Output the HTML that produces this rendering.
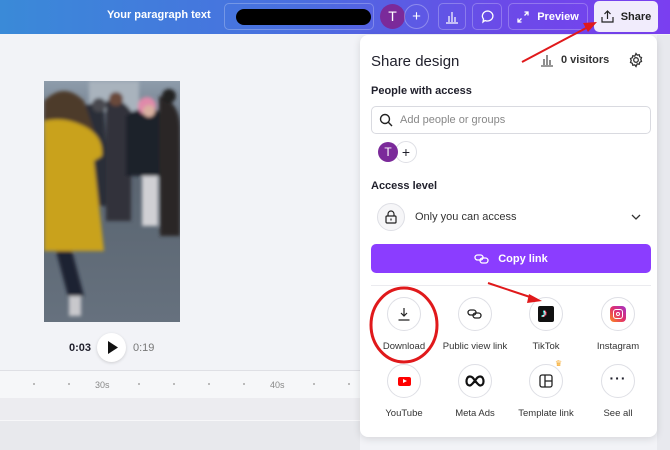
<!DOCTYPE html>
<html><head><meta charset="utf-8"><style>
*{box-sizing:border-box;margin:0;padding:0}
body{width:670px;height:450px;overflow:hidden;position:relative;background:#f2f3f7;font-family:"Liberation Sans",sans-serif;color:#1f1f2b}
.hdr{position:absolute;left:0;top:0;width:670px;height:34px;background:linear-gradient(90deg,#3a8ad8 0%,#4a6ee0 45%,#6b4ae8 75%,#7a3ff0 100%)}
.abs{position:absolute}
.hb{position:absolute;top:3px;height:27px;border:1px solid rgba(255,255,255,.25);border-radius:5px;color:#fff;font-weight:bold;font-size:11px;display:flex;align-items:center;justify-content:center}
.panel{position:absolute;left:360px;top:35px;width:297px;height:402px;background:#fff;border-radius:8px;box-shadow:0 2px 8px rgba(0,0,0,.12)}
.ic{position:absolute;width:34px;height:34px;border-radius:50%;border:1px solid #dedfe5;background:#fff;display:flex;align-items:center;justify-content:center}
.lb{position:absolute;font-size:9.5px;color:#333;width:90px;text-align:center}
.b{font-weight:bold}
.dot{position:absolute;top:383px;width:1.5px;height:1.5px;background:#bbb}
</style></head><body>
<div class="hdr">
 <div class="abs" style="left:107px;top:9px;color:#fff;font-size:11px;font-weight:bold">Your paragraph text</div>
 <div class="hb" style="left:224px;width:150px"></div>
 <div class="abs" style="left:236px;top:9px;width:135px;height:16px;background:#000;border-radius:8px"></div>
 <div class="abs" style="left:380px;top:4px;width:25px;height:25px;border-radius:50%;background:#7b2a9a;color:#fff;font-size:14px;text-align:center;line-height:25px">T</div>
 <div class="abs" style="left:404px;top:4px;width:25px;height:25px;border-radius:50%;border:1px solid rgba(255,255,255,.3);color:#fff;font-size:15px;text-align:center;line-height:23px">+</div>
 <div class="hb" style="left:438px;width:28px"><svg width="14" height="14" viewBox="0 0 14 14" fill="none" stroke="#fff" stroke-width="1.2"><path d="M1 13h12M4 12V6M7 12V2M10 12V7"/></svg></div>
 <div class="hb" style="left:472px;width:30px"><svg width="15" height="15" viewBox="0 0 15 15" fill="none" stroke="#fff" stroke-width="1.3"><path d="M7.5 2a5.5 5 0 1 1-2.5 9.5L3 13l.5-3A5.5 5 0 0 1 7.5 2z"/></svg></div>
 <div class="hb" style="left:508px;width:80px"><svg width="12" height="12" viewBox="0 0 12 12" fill="none" stroke="#fff" stroke-width="1.3" style="margin-right:8px"><path d="M1 11l3.5-3.5M1 7.5V11h3.5M11 1L7.5 4.5M7.5 1H11v3.5"/></svg>Preview</div>
 <div class="abs" style="left:594px;top:1px;width:64px;height:31px;background:#f1ecfc;border-radius:5px;font-size:11px;font-weight:bold;display:flex;align-items:center;justify-content:center;color:#222"><svg width="13" height="13" viewBox="0 0 13 13" fill="none" stroke="#222" stroke-width="1.2" style="margin-right:7px"><path d="M6.5 9V1M3.5 4l3-3 3 3M1 7v5h11V7"/></svg>Share</div>
</div>
<div class="abs" style="left:657px;top:35px;width:13px;height:415px;background:#e8e9ee"></div>
<!-- photo -->
<svg class="abs" style="left:44px;top:81px" width="136" height="241" viewBox="0 0 136 241">
<defs><linearGradient id="g" x1="0" y1="0" x2="0" y2="1"><stop offset="0" stop-color="#8e9cab"/><stop offset=".3" stop-color="#5a6470"/><stop offset=".55" stop-color="#5d6874"/><stop offset="1" stop-color="#66717e"/></linearGradient>
<filter id="bl"><feGaussianBlur stdDeviation="1.8"/></filter></defs>
<rect width="136" height="241" fill="url(#g)"/>
<g filter="url(#bl)">
<rect x="45" y="0" width="50" height="30" fill="#a9b3bd"/>
<path d="M40 25 q10-5 20 0 l5 100 h-20z" fill="#2a2e38"/>
<path d="M62 20 q15 -5 25 10 l0 110 h-25z" fill="#30323a"/>
<circle cx="72" cy="18" r="7" fill="#6a4a3a"/>
<circle cx="55" cy="24" r="7" fill="#4a4a50"/>
<path d="M82 35 q20-15 40 0 v60 h-40z" fill="#1f232c"/>
<circle cx="103" cy="25" r="9" fill="#e08aaa"/>
<circle cx="105" cy="30" r="6" fill="#d9b0a0"/>
<rect x="98" y="95" width="16" height="50" fill="#d0d0d4"/>
<path d="M115 15 q20 5 21 30 v110 h-20z" fill="#2a2628"/>
<circle cx="125" cy="15" r="7" fill="#222"/>
<path d="M0 20 q20-20 40 0 l10 30 h-50z" fill="#4e3a2c"/>
<path d="M0 40 q20-5 40 5 q20 10 18 30 l-8 5 l10 90 h-60z" fill="#c9a21e"/>
<path d="M12 170 h16 l12 45 h-16z" fill="#1d2230"/>
<rect x="25" y="215" width="12" height="20" fill="#c8c8cc"/>
</g>
</svg>
<div class="abs" style="left:69px;top:342px;font-size:11px;font-weight:bold">0:03</div>
<div class="abs" style="left:97px;top:333px;width:29px;height:29px;border-radius:50%;background:#fff;box-shadow:0 1px 3px rgba(0,0,0,.15)"><svg width="29" height="29"><path d="M11 8l10 6.5-10 6.5z" fill="#111"/></svg></div>
<div class="abs" style="left:133px;top:342px;font-size:11px;color:#777">0:19</div>
<div class="abs" style="left:0;top:370px;width:360px;height:1px;background:#dfe0e5"></div>
<div class="abs" style="left:0;top:371px;width:360px;height:27px;background:#f6f7f9"></div>
<div class="dot" style="left:33px"></div><div class="dot" style="left:68px"></div><div class="dot" style="left:138px"></div><div class="dot" style="left:173px"></div><div class="dot" style="left:208px"></div><div class="dot" style="left:243px"></div><div class="dot" style="left:313px"></div><div class="dot" style="left:348px"></div>
<div class="abs" style="left:95px;top:380px;font-size:9px;color:#888">30s</div>
<div class="abs" style="left:270px;top:380px;font-size:9px;color:#888">40s</div>
<div class="abs" style="left:0;top:398px;width:360px;height:22px;background:#ececf0"></div>
<div class="abs" style="left:0;top:420px;width:360px;height:1px;background:#f7f7f9"></div>
<div class="abs" style="left:0;top:421px;width:360px;height:29px;background:#e8e9ed"></div>
<!-- panel -->
<div class="panel">
 <div class="abs" style="left:11px;top:18px;font-size:15px">Share design</div>
 <svg class="abs" style="left:180px;top:19px" width="14" height="13" viewBox="0 0 14 13" fill="none" stroke="#333" stroke-width="1.1"><path d="M1 12h12M4 11V5M7 11V1M10 11V6"/></svg>
 <div class="abs" style="left:201px;top:19px;font-size:11px;font-weight:bold;color:#333">0 visitors</div>
 <svg class="abs" style="left:268px;top:17px" width="16" height="16" viewBox="0 0 16 16" fill="none" stroke="#333" stroke-width="1.3"><circle cx="8" cy="8" r="2.3"/><path d="M8 1.5l1.2 1.6 2-.4.5 2 1.8.9-.7 1.9.7 1.9-1.8.9-.5 2-2-.4L8 14.5l-1.2-1.6-2 .4-.5-2-1.8-.9.7-1.9-.7-1.9 1.8-.9.5-2 2 .4z"/></svg>
 <div class="abs b" style="left:11px;top:50px;font-size:11px">People with access</div>
 <div class="abs" style="left:11px;top:71px;width:280px;height:28px;border:1px solid #d9dae0;border-radius:5px"></div>
 <svg class="abs" style="left:19px;top:78px" width="14" height="14" viewBox="0 0 14 14" fill="none" stroke="#222" stroke-width="1.4"><circle cx="6" cy="6" r="4.5"/><path d="M9.3 9.3L13 13"/></svg>
 <div class="abs" style="left:40px;top:79px;font-size:11px;color:#888">Add people or groups</div>
 <div class="abs" style="left:35px;top:106px;width:22px;height:22px;border-radius:50%;border:1px solid #dedfe5;background:#fff;text-align:center;line-height:20px;font-size:14px">+</div>
 <div class="abs" style="left:18px;top:107px;width:20px;height:20px;border-radius:50%;background:#7b2a9a;color:#fff;text-align:center;line-height:20px;font-size:12px">T</div>
 <div class="abs b" style="left:11px;top:145px;font-size:11px">Access level</div>
 <div class="abs" style="left:17px;top:168px;width:28px;height:28px;border-radius:50%;border:1px solid #dedfe5;background:#f6f6f8"></div>
 <svg class="abs" style="left:25px;top:175px" width="12" height="14" viewBox="0 0 12 14" fill="none" stroke="#222" stroke-width="1.2"><rect x="1" y="6" width="10" height="7" rx="1"/><path d="M3 6V4a3 3 0 0 1 6 0v2M6 8.5v2"/></svg>
 <div class="abs" style="left:55px;top:176px;font-size:11px;color:#333">Only you can access</div>
 <svg class="abs" style="left:271px;top:178px" width="10" height="8" viewBox="0 0 10 8" fill="none" stroke="#333" stroke-width="1.3"><path d="M1 2l4 4 4-4"/></svg>
 <div class="abs" style="left:11px;top:209px;width:280px;height:29px;background:#8b3dff;border-radius:5px;color:#fff;font-size:11px;font-weight:bold;display:flex;align-items:center;justify-content:center"><svg width="16" height="12" viewBox="0 0 16 12" fill="none" stroke="#fff" stroke-width="1.3" style="margin-right:8px"><rect x="1" y="2" width="8" height="5" rx="2.5"/><rect x="6" y="5" width="8" height="5" rx="2.5"/></svg>Copy link</div>
 <div class="abs" style="left:11px;top:250px;width:280px;height:1px;background:#ebebef"></div>
 <div class="ic" style="left:27px;top:262px"><svg width="14" height="14" viewBox="0 0 14 14" fill="none" stroke="#222" stroke-width="1.2"><path d="M7 1v8M4 6l3 3 3-3M1.5 13h11"/></svg></div>
 <div class="lb" style="left:-1px;top:306px">Download</div>
 <div class="ic" style="left:98px;top:262px"><svg width="16" height="12" viewBox="0 0 16 12" fill="none" stroke="#222" stroke-width="1.3"><rect x="1" y="2" width="8" height="5" rx="2.5"/><rect x="6" y="5" width="8" height="5" rx="2.5"/></svg></div>
 <div class="lb" style="left:70px;top:306px">Public view link</div>
 <div class="ic" style="left:169px;top:262px"><div style="width:16px;height:16px;background:#111;border-radius:2px;position:relative"><span style="position:absolute;left:3px;top:0;color:#fff;font-size:12px;font-weight:bold;text-shadow:-1px 0 #25f4ee,1px 0 #fe2c55">♪</span></div></div>
 <div class="lb" style="left:141px;top:306px">TikTok</div>
 <div class="ic" style="left:241px;top:262px"><div style="width:16px;height:16px;border-radius:4px;background:linear-gradient(45deg,#fd8a1f,#e1306c 50%,#a233c9);display:flex;align-items:center;justify-content:center"><div style="width:10px;height:10px;border:1.3px solid #fff;border-radius:3px;display:flex;align-items:center;justify-content:center"><div style="width:4px;height:4px;border:1.2px solid #fff;border-radius:50%"></div></div></div></div>
 <div class="lb" style="left:213px;top:306px">Instagram</div>
 <div class="ic" style="left:27px;top:329px"><div style="width:13px;height:9px;background:#f00;border-radius:2px;position:relative"><div style="position:absolute;left:5px;top:2px;border-left:4px solid #fff;border-top:2.5px solid transparent;border-bottom:2.5px solid transparent"></div></div></div>
 <div class="lb" style="left:-1px;top:373px">YouTube</div>
 <div class="ic" style="left:98px;top:329px"><svg width="20" height="12" viewBox="0 0 20 12" fill="none" stroke="#111" stroke-width="2.2"><path d="M10 6C8 2 6.5 1.5 5 1.5 2.5 1.5 1.5 4 1.5 6.5S3 10.5 4.5 10.5C7 10.5 9 6 10 6s3 4.5 5.5 4.5c1.5 0 3-1.5 3-4s-1-5-3.5-5C13.5 1.5 12 2 10 6z"/></svg></div>
 <div class="lb" style="left:70px;top:373px">Meta Ads</div>
 <div class="ic" style="left:169px;top:329px"><svg width="14" height="14" viewBox="0 0 14 14" fill="none" stroke="#222" stroke-width="1.3"><rect x="1" y="1" width="12" height="12" rx="2"/><path d="M6 1v12M6 7h7"/></svg></div>
 <div class="abs" style="left:195px;top:324px;color:#f5a623;font-size:8px">♛</div>
 <div class="lb" style="left:141px;top:373px">Template link</div>
 <div class="ic" style="left:241px;top:329px"><span style="font-size:14px;font-weight:bold;letter-spacing:1px;margin-top:-6px">···</span></div>
 <div class="lb" style="left:213px;top:373px">See all</div>
</div>
<svg class="abs" style="left:0;top:0" width="670" height="450">
<ellipse cx="404" cy="325" rx="33" ry="37" fill="none" stroke="#e0191b" stroke-width="3"/>
<path d="M522 62L588 27" stroke="#e0191b" stroke-width="2"/><path d="M597 22l-14 1 5 9z" fill="#e0191b"/>
<path d="M488 283L530 297" stroke="#e0191b" stroke-width="2"/><path d="M542 301l-13-7-2 9z" fill="#e0191b"/>
</svg>
</body></html>
